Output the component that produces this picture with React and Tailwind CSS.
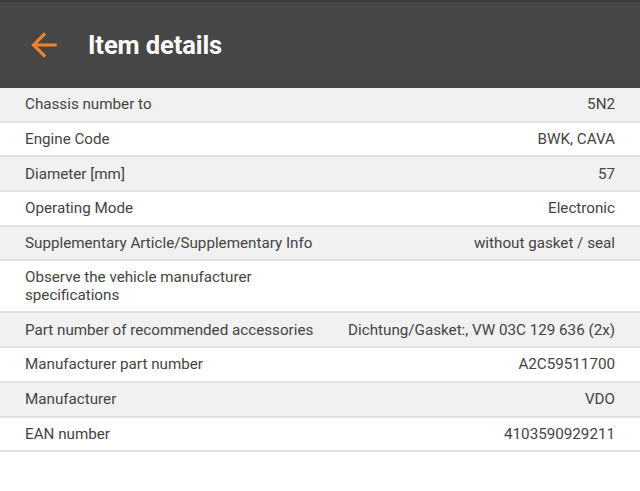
const rows = [
  ["Chassis number to", "5N2"],
  ["Engine Code", "BWK, CAVA"],
  ["Diameter [mm]", "57"],
  ["Operating Mode", "Electronic"],
  ["Supplementary Article/Supplementary Info", "without gasket / seal"],
  ["Observe the vehicle manufacturer specifications", ""],
  ["Part number of recommended accessories", "Dichtung/Gasket:, VW 03C 129 636 (2x)"],
  ["Manufacturer part number", "A2C59511700"],
  ["Manufacturer", "VDO"],
  ["EAN number", "4103590929211"],
];

export default function App() {
  return (
    <div className="w-[640px] h-[491px] bg-white font-['Roboto',sans-serif] overflow-hidden">
      {/* Header */}
      <div className="h-[88px] bg-[#464646] border-t-2 border-[#3a3a3a] flex items-center">
        <svg width="38" height="38" viewBox="0 0 24 24" className="ml-[25px]">
          <path
            d="M20 11H7.83l5.59-5.59L12 4l-8 8 8 8 1.41-1.41L7.83 13H20v-2z"
            fill="#f0822f"
          />
        </svg>
        <h1 className="ml-[25px] text-[25.5px] font-bold text-white tracking-[-0.1px]">Item details</h1>
      </div>

      {/* Detail rows */}
      <div>
        {rows.map(([label, value], i) => (
          <div
            key={label}
            className={`flex justify-between items-center gap-4 pl-[25px] pr-[25px] border-b-2 border-[#e2e2e2] text-[15.2px] leading-[18px] text-[#444] ${
              i % 2 === 0 ? "bg-[#f1f1f1]" : "bg-white"
            } ${i === 5 ? "h-[52px]" : "h-[34.7px]"}`}
          >
            <span className={i === 5 ? "max-w-[250px]" : ""}>{label}</span>
            <span className="text-right whitespace-nowrap">{value}</span>
          </div>
        ))}
      </div>
    </div>
  );
}
